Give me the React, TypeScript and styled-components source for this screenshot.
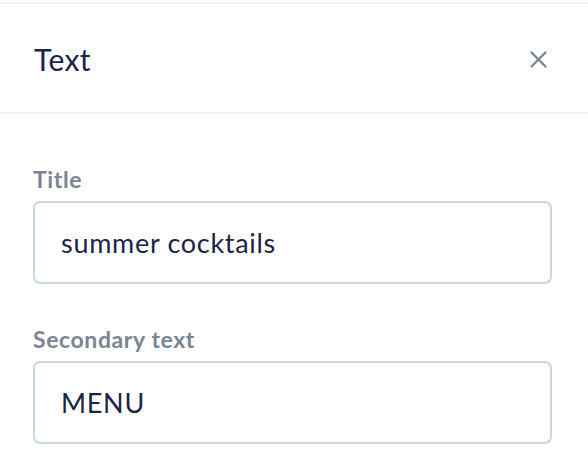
import styled, { createGlobalStyle } from "styled-components";

const GlobalStyle = createGlobalStyle`
  html, body {
    margin: 0;
    padding: 0;
    background: #ffffff;
  }
  body {
    font-family: Lato, "Open Sans", Arial, sans-serif;
    -webkit-font-smoothing: antialiased;
  }
`;

const Panel = styled.div`
  width: 588px;
  height: 474px;
  margin-top: 2px;
  border-top: 2px solid #eef2f6;
  background: #ffffff;
  overflow: hidden;
`;

const Header = styled.div`
  height: 110px;
  display: flex;
  align-items: center;
  justify-content: space-between;
  padding: 2px 41px 0 34px;
  border-bottom: 2px solid #eef2f6;
  box-sizing: border-box;
`;

const Heading = styled.h2`
  margin: 0;
  font-size: 30px;
  font-weight: 400;
  color: #1c2447;
  letter-spacing: 0.4px;
`;

const CloseButton = styled.button`
  width: 18px;
  height: 18px;
  padding: 0;
  border: none;
  background: none;
  cursor: pointer;
  display: flex;
  align-items: center;
  justify-content: center;
`;

const Form = styled.div`
  display: flex;
  flex-direction: column;
  gap: 41px;
  padding: 51px 36px 0 33px;
`;

const Field = styled.label`
  display: flex;
  flex-direction: column;
  gap: 8px;
`;

const Label = styled.span`
  font-size: 23px;
  line-height: 28px;
  font-weight: 700;
  color: #7b8595;
  letter-spacing: 0.6px;
`;

const Input = styled.input`
  height: 83px;
  box-sizing: border-box;
  border: 2px solid #c9d6e4;
  border-radius: 7px;
  padding: 0 26px;
  font-family: Lato, "Open Sans", Arial, sans-serif;
  font-size: 27px;
  letter-spacing: 0.7px;
  color: #1c2447;
  background: #ffffff;
  outline: none;
`;

const fields = [
  { label: "Title", value: "summer cocktails" },
  { label: "Secondary text", value: "MENU" },
];

export default function App() {
  return (
    <>
      <GlobalStyle />
      <Panel>
        <Header>
          <Heading>Text</Heading>
          <CloseButton aria-label="Close">
            <svg width="17" height="17" viewBox="0 0 17 17">
              <path
                d="M1.5 1.5 L15.5 15.5 M15.5 1.5 L1.5 15.5"
                stroke="#778293"
                strokeWidth="2.2"
                strokeLinecap="round"
              />
            </svg>
          </CloseButton>
        </Header>
        <Form>
          {fields.map((f) => (
            <Field key={f.label}>
              <Label>{f.label}</Label>
              <Input defaultValue={f.value} />
            </Field>
          ))}
        </Form>
      </Panel>
    </>
  );
}
